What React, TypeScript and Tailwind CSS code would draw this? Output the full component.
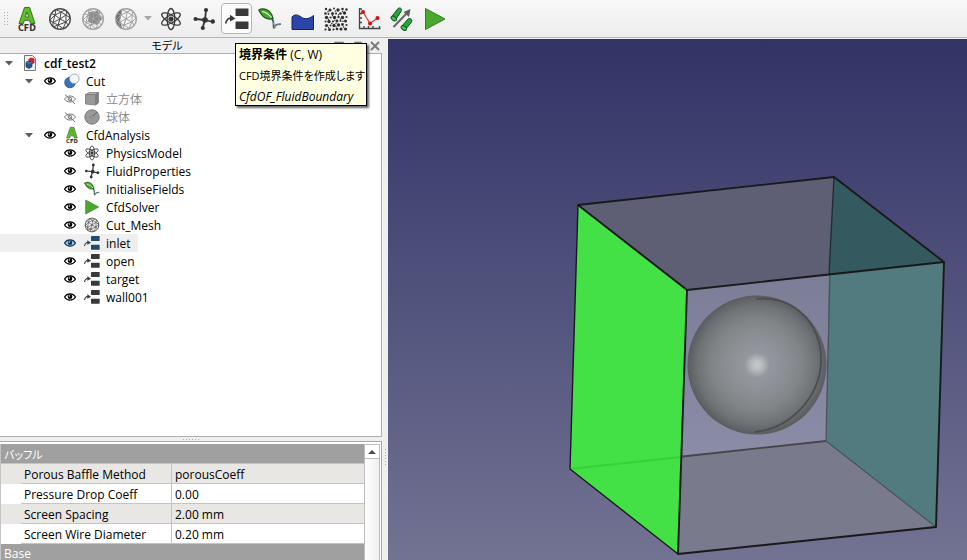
import type { ReactNode } from 'react';

type IconProps = { className?: string; color?: string };

function CfdIcon({ className = 'size-6' }: IconProps) {
  return (
    <svg viewBox="0 0 24 24" className={`overflow-visible ${className}`}>
      <path
        d="M9.5 .5h5.2l5.2 16h-4.4l-1-3.2H9.4l-1 3.2H4z M12 4.8l-1.7 5.2h3.4z"
        fillRule="evenodd"
        fill="#5cc028"
        stroke="#3f6e28"
        strokeWidth="1"
      />
      <text
        x="12"
        y="23.5"
        textAnchor="middle"
        fontSize="8"
        fontWeight="700"
        fontFamily="DejaVu Sans, sans-serif"
        fill="#333"
      >
        CFD
      </text>
    </svg>
  );
}

function MeshIcon({ className = 'size-6', color = '#4a4a4a', part }: IconProps & { part?: 'inner' | 'side' }) {
  return (
    <svg viewBox="0 0 24 24" className={className} fill="none" stroke={color} strokeWidth="1">
      <circle cx="12" cy="12" r="10.3" fill="#f4f4f4" strokeWidth="1.4" />
      {part === 'inner' && <path d="M8 5l9-1 4 8-5 6-9-3z" fill="#8a8a8a" stroke="none" />}
      {part === 'side' && <path d="M8 2.5C0 6 0 18 8 21.5l-2-9z" fill="#6e6e6e" stroke="none" />}
      <path d="M8 2.5L13 5l4-2M13 5L7 8 8 2.5M7 8l-4-1.5M7 8l-5 5M7 8l5 4 1-7M13 5l5 3 1-4M18 8l-6 4M18 8l4 3M18 8l0 7-6-3M12 12l-7 3.5L7 8M5 15.5L2 13M5 15.5L5 20M5 15.5L10 18l2-6M10 18l8-3M10 18l-5 2M10 18l-1 4M10 18l5 3.5 3-6.5M18 15l4-4M18 15l2 3" />
    </svg>
  );
}

function AtomIcon({ className = 'size-6', color = '#3a3a3a' }: IconProps) {
  return (
    <svg viewBox="0 0 24 24" className={className} fill="none" stroke={color} strokeWidth="1.3">
      <ellipse cx="12" cy="12" rx="3.8" ry="10.5" />
      <ellipse cx="12" cy="12" rx="3.8" ry="10.5" transform="rotate(60 12 12)" />
      <ellipse cx="12" cy="12" rx="3.8" ry="10.5" transform="rotate(120 12 12)" />
      <circle cx="12" cy="12" r="2.6" fill={color} stroke="none" />
    </svg>
  );
}

function MoleculeIcon({ className = 'size-6', color = '#333' }: IconProps) {
  return (
    <svg viewBox="0 0 24 24" className={className} fill={color} stroke={color} strokeWidth="1.8">
      <path d="M13 13L3.5 12M13 13l1-10M13 13l8 2M13 13l-2.5 8" fill="none" />
      <g stroke="none">
        <circle cx="13" cy="13" r="2.8" />
        <circle cx="3.5" cy="12" r="2" />
        <circle cx="14" cy="3" r="2.1" />
        <circle cx="20.8" cy="14.5" r="2.2" />
        <circle cx="10.8" cy="21" r="2.1" />
      </g>
    </svg>
  );
}

function BoundaryIcon({ className = 'size-6', color = '#393939' }: IconProps) {
  return (
    <svg viewBox="0 0 24 24" className={className} fill={color}>
      <rect x="10.5" y="1.5" width="13" height="7.5" rx=".6" />
      <rect x="10.5" y="14.5" width="13" height="7.5" rx=".6" />
      <path d="M.8 16.5C1.3 12.5 4 10.8 7 11.2" fill="none" stroke={color} strokeWidth="1.7" />
      <path d="M5 7.8l5.5 3.7L5 14.5z" />
    </svg>
  );
}

function LeafIcon({ className = 'size-6' }: IconProps) {
  return (
    <svg viewBox="0 0 24 24" className={className} fill="none">
      <path d="M.8 3C4 .8 13 1 15 11.500 8.500 13.500 4 10 .8 3z" fill="#46a82c" stroke="#1d4f16" strokeWidth="1.2" />
      <path d="M4 4.500c4 .8 7 3 9.500 6" stroke="#d8f0cc" strokeWidth="1.2" />
      <path d="M14 11c1.5 3 2 5.5 1.8 10.500" stroke="#2f4f4a" strokeWidth="1.8" />
      <path d="M16 21c.8-3 3-4 7-3.800" stroke="#5b7a80" strokeWidth="1.8" />
      <path d="M14.500 14l3 7" stroke="#88a5a8" strokeWidth="1" />
    </svg>
  );
}

function FluidIcon({ className = 'size-6' }: IconProps) {
  return (
    <svg viewBox="0 0 24 24" className={className}>
      <path
        d="M1 10c2.5-3 6-2.5 9 0 3.5 2.6 8 2.2 12.5-1.5v14H1z"
        fill="#2b46a8"
        stroke="#15245e"
        strokeWidth="1"
      />
    </svg>
  );
}

const PORES = [
  [2, 2, 1.2], [6, 3, 1.6], [10, 1.5, 1], [14, 3, 1.7], [18.5, 2, 1.3], [22.5, 2.5, 1.2],
  [1.5, 6.5, 1.3], [4.5, 7, 0.9], [8.5, 6.5, 1.5], [12, 6.5, 1.1], [16.5, 6.5, 1.3], [20.5, 6, 1.7],
  [2.5, 10.5, 1.7], [6.5, 10.5, 1.1], [10.5, 10.5, 1.7], [14.5, 10, 1.2], [18.5, 10.5, 1.7], [22.5, 10, 1.1],
  [1.5, 14.5, 1], [5, 14.5, 1.7], [9, 14.5, 1.1], [13, 14, 1.4], [16.5, 14, 1], [21.5, 14, 1.5],
  [2.5, 18.5, 1.6], [6.5, 18.5, 1], [10, 18.5, 1.7], [14.5, 18, 1.7], [18.5, 17.5, 1.4], [22.5, 18, 1.1],
  [1.5, 22.5, 1.1], [5.5, 22.5, 1.5], [9.5, 22.5, 1.1], [13, 22, 1.3], [17, 22, 1.6], [21.5, 22, 1.6],
  [4, 4.8, 0.8], [11.5, 4, 0.8], [18.5, 4.5, 0.7], [14.5, 7.8, 0.8], [8.5, 8.8, 0.7], [4.5, 12.3, 0.7],
  [16.5, 12.2, 0.8], [10.8, 13.3, 0.7], [19, 14.3, 0.8], [7.8, 16.5, 0.8], [12, 16.2, 0.7], [4.5, 20.5, 0.7],
  [12.2, 20, 0.7], [19.5, 20, 0.8],
];

function PorousIcon({ className = 'size-6' }: IconProps) {
  return (
    <svg viewBox="0 0 24 24" className={className} fill="#303030">
      {PORES.map(([x, y, r]) => (
        <circle key={`${x}-${y}`} cx={x} cy={y} r={r} />
      ))}
    </svg>
  );
}

function PlotIcon({ className = 'size-6' }: IconProps) {
  return (
    <svg viewBox="0 0 24 24" className={className} fill="none">
      <path
        d="M2.5 1v20.5h21M2.5 2h2.5M2.5 6.5h2.5M2.5 11h2.5M2.5 15.5h2.5M7 21.5V19M11.5 21.5V19M16 21.5V19M22.5 21.5V19"
        stroke="#444"
        strokeWidth="1.3"
      />
      <path d="M6 5L13 16.5 20.5 11" stroke="#e02a2a" strokeWidth="1.1" />
      <g fill="#d40f0f">
        <circle cx="6" cy="5" r="2" />
        <circle cx="13" cy="16.5" r="2" />
        <circle cx="20.5" cy="11" r="2" />
      </g>
    </svg>
  );
}

function ProbeIcon({ className = 'size-6' }: IconProps) {
  return (
    <svg viewBox="0 0 24 24" className={className}>
      <path d="M3.5 20L17 6" stroke="#666" strokeWidth="2" />
      <path d="M20.5 2l-1.500 8-5.500-5z" fill="#5f5f5f" />
      <path d="M1.5 10L8 1.5c2.5-1.5 4.5.5 3 3L5.5 13z" fill="#25a53a" stroke="#0d5a1b" />
      <path d="M11.5 19.5l6.5-7.5c2.5-1.5 4.5.5 3.5 3L15.5 22.5z" fill="#25a53a" stroke="#0d5a1b" />
      <ellipse cx="3.8" cy="11.5" rx="3" ry="2" transform="rotate(35 3.8 11.5)" fill="#3fbf55" stroke="#0d5a1b" />
      <ellipse cx="13.8" cy="21" rx="3" ry="2" transform="rotate(35 13.8 21)" fill="#3fbf55" stroke="#0d5a1b" />
    </svg>
  );
}

function PlayIcon({ className = 'size-6' }: IconProps) {
  return (
    <svg viewBox="0 0 24 24" className={className}>
      <path d="M2.5 1.5L22 12 2.5 22.5z" fill="#4ba82e" stroke="#35801f" />
    </svg>
  );
}

function DocumentIcon() {
  return (
    <svg viewBox="0 0 16 16" className="size-4">
      <path d="M2.5 .5h8l3 3v12h-11z" fill="#f2f2f2" stroke="#777" />
      <path d="M6 4.5l3-2 3.5 1v4.5L9 9.5z" fill="#d5202a" />
      <path d="M4 7l3-1 3 1.2v4.5L7 13.5l-3-1.5z" fill="#27568f" stroke="#163a63" strokeWidth=".7" />
      <path d="M4 7l3 1.2L10 7" fill="none" stroke="#6d9bd0" strokeWidth=".7" />
    </svg>
  );
}

function CutIcon({ className = 'size-4' }: IconProps) {
  return (
    <svg viewBox="0 0 16 16" className={className}>
      <circle cx="6" cy="9.5" r="5.3" fill="#3a72bb" stroke="#23518c" strokeWidth=".8" />
      <circle cx="10.3" cy="5.8" r="4.8" fill="#f6f6f6" stroke="#999" strokeWidth=".8" />
    </svg>
  );
}

function CubeIcon({ className = 'size-4' }: IconProps) {
  return (
    <svg viewBox="0 0 16 16" className={className} stroke="#7b7b7b" strokeWidth=".8">
      <path d="M1.5 3.5l4-2h9l-3 2z" fill="#b0b0b0" />
      <path d="M1.5 3.5h10v10.5l-10-1z" fill="#989898" />
      <path d="M11.5 3.5l3-2v10.5l-3 2z" fill="#7f7f7f" />
    </svg>
  );
}

function SphereIcon({ className = 'size-4' }: IconProps) {
  return (
    <svg viewBox="0 0 16 16" className={className}>
      <circle cx="8" cy="8" r="7.2" fill="#999" stroke="#7c7c7c" />
      <path d="M8 8l5-5" stroke="#666" />
      <circle cx="8" cy="8" r="1.3" fill="#bbb" stroke="#666" strokeWidth=".6" />
    </svg>
  );
}

function EyeIcon({ hidden, selected }: { hidden?: boolean; selected?: boolean }) {
  if (hidden) {
    return (
      <svg viewBox="0 0 12 12" className="size-3" fill="none" stroke="#777" strokeWidth="1">
        <path d="M.5 6C3 2 9 2 11.5 6 9 10 3 10 .5 6zM1 1.5l10 9.5" />
        <circle cx="6" cy="6" r="1.8" />
      </svg>
    );
  }
  const ink = selected ? '#0c3558' : '#000';
  return (
    <svg viewBox="0 0 12 12" className="size-3">
      <path d="M.5 6C3 1.8 9 1.8 11.5 6 9 10.2 3 10.2 .5 6z" fill={selected ? '#a9cdee' : '#fff'} stroke={ink} strokeWidth="1.2" />
      <circle cx="6" cy="5.8" r="2.3" fill={ink} />
      <circle cx="5.3" cy="5" r=".7" fill="#fff" />
    </svg>
  );
}

function ToolButton({ label, active, children }: { label: string; active?: boolean; children: ReactNode }) {
  return (
    <button
      type="button"
      aria-label={label}
      className={
        active
          ? 'flex h-[31px] w-[31px] items-center justify-center rounded-sm border border-[#b4b4b4] bg-[#fcfcfc]'
          : 'flex h-[31px] w-[31px] items-center justify-center'
      }
    >
      {children}
    </button>
  );
}

function Toolbar() {
  return (
    <header className="flex h-[38px] shrink-0 items-center gap-0.5 border-b border-[#b6b6b6] bg-linear-to-b from-[#f8f8f8] to-[#ededed] pl-[3px]">
      <div className="h-4 w-[6px] bg-[radial-gradient(#b5b5b5_1px,transparent_1px)] bg-size-[3px_3px]" />
      <ToolButton label="Analysis container"><CfdIcon /></ToolButton>
      <ToolButton label="Mesh"><MeshIcon /></ToolButton>
      <ToolButton label="Mesh refinement"><MeshIcon color="#a2a2a2" part="inner" /></ToolButton>
      <ToolButton label="Dynamic mesh"><MeshIcon color="#a2a2a2" part="side" /></ToolButton>
      <button type="button" aria-label="More mesh tools" className="flex h-8 w-2.5 items-center justify-center">
        <svg viewBox="0 0 8 5" className="h-[5px] w-2"><path d="M0 0h8L4 4.5z" fill="#a8a8a8" /></svg>
      </button>
      <ToolButton label="Physics model"><AtomIcon /></ToolButton>
      <ToolButton label="Fluid properties"><MoleculeIcon /></ToolButton>
      <ToolButton label="境界条件" active><BoundaryIcon /></ToolButton>
      <ToolButton label="Initialise fields"><LeafIcon /></ToolButton>
      <ToolButton label="Initialisation zone"><FluidIcon /></ToolButton>
      <ToolButton label="Porous zone"><PorousIcon /></ToolButton>
      <ToolButton label="Reporting function"><PlotIcon /></ToolButton>
      <ToolButton label="Scalar transport"><ProbeIcon /></ToolButton>
      <ToolButton label="Solver"><PlayIcon /></ToolButton>
    </header>
  );
}

type Item = { name: string; icon: ReactNode; hidden?: boolean; selected?: boolean; children?: Item[] };

const TREE: Item[] = [
  {
    name: 'Cut',
    icon: <CutIcon />,
    children: [
      { name: '立方体', icon: <CubeIcon />, hidden: true },
      { name: '球体', icon: <SphereIcon />, hidden: true },
    ],
  },
  {
    name: 'CfdAnalysis',
    icon: <CfdIcon className="size-4" />,
    children: [
      { name: 'PhysicsModel', icon: <AtomIcon className="size-4" /> },
      { name: 'FluidProperties', icon: <MoleculeIcon className="size-4" /> },
      { name: 'InitialiseFields', icon: <LeafIcon className="size-4" /> },
      { name: 'CfdSolver', icon: <PlayIcon className="size-4" /> },
      { name: 'Cut_Mesh', icon: <MeshIcon className="size-4" /> },
      { name: 'inlet', icon: <BoundaryIcon className="size-4" color="#244a6b" />, selected: true },
      { name: 'open', icon: <BoundaryIcon className="size-4" /> },
      { name: 'target', icon: <BoundaryIcon className="size-4" /> },
      { name: 'wall001', icon: <BoundaryIcon className="size-4" /> },
    ],
  },
];

function Expander() {
  return (
    <button type="button" aria-label="Collapse" className="flex w-2 justify-center">
      <svg viewBox="0 0 8 5" className="h-[5px] w-2"><path d="M0 0h8L4 4.5z" fill="#5c5c5c" /></svg>
    </button>
  );
}

function TreeItem({ item }: { item: Item }) {
  return (
    <li>
      {item.children ? (
        <div className="flex h-[18px] items-center pl-[25px]">
          <Expander />
          <span className="ml-[11px]"><EyeIcon /></span>
          <span className="ml-2">{item.icon}</span>
          <span className="ml-1.5 pt-0.5">{item.name}</span>
        </div>
      ) : (
        <div className={item.selected ? 'flex h-[18px] w-[138px] items-center bg-[#efefef] pl-16' : 'flex h-[18px] items-center pl-16'}>
          <EyeIcon hidden={item.hidden} selected={item.selected} />
          <span className="ml-2">{item.icon}</span>
          <span className={item.hidden ? 'ml-1.5 pt-0.5 text-[#8c8c8c]' : 'ml-1.5 pt-0.5'}>{item.name}</span>
        </div>
      )}
      {item.children && (
        <ul>
          {item.children.map((child) => (
            <TreeItem key={child.name} item={child} />
          ))}
        </ul>
      )}
    </li>
  );
}

const PROPERTIES = [
  ['Porous Baffle Method', 'porousCoeff'],
  ['Pressure Drop Coeff', '0.00'],
  ['Screen Spacing', '2.00 mm'],
  ['Screen Wire Diameter', '0.20 mm'],
];

function PropertyTable() {
  return (
    <div className="flex h-[119px] shrink-0 overflow-hidden border-t border-r border-[#a8a8a8] bg-white pt-0.5 pr-px">
      <table className="h-fit min-w-0 flex-1 table-fixed border-separate border-spacing-0 border-l border-[#c4c4c4] leading-[17px]">
        <colgroup>
          <col className="w-5" />
          <col className="w-[151px]" />
          <col />
        </colgroup>
        <tbody>
          <tr>
            <th colSpan={3} className="h-5 border-b border-[#c4c4c4] bg-[#a0a0a0] pt-0.5 pl-[3px] text-left text-[11px] font-normal text-white [font-feature-settings:'palt']">
              バッフル
            </th>
          </tr>
          {PROPERTIES.map(([name, value]) => (
            <tr key={name} className="odd:bg-white even:bg-[#e8e7e3]">
              <td className="h-5" />
              <th scope="row" className="h-5 border-r border-b border-[#c4c4c4] pt-0.5 pl-[3px] text-left font-normal">{name}</th>
              <td className="h-5 border-b border-[#c4c4c4] pt-0.5 pl-[3px]">{value}</td>
            </tr>
          ))}
          <tr>
            <th colSpan={3} className="h-5 bg-[#a0a0a0] pb-0.5 pl-[3px] text-left font-normal text-white">Base</th>
          </tr>
        </tbody>
      </table>
      <div className="w-4 shrink-0 border-x border-t border-[#bdbdbd] bg-linear-to-r from-white to-[#efefef]">
        <button type="button" aria-label="Scroll up" className="flex h-3.5 w-full items-center justify-center border-b border-[#bdbdbd] bg-white">
          <svg viewBox="0 0 8 4" className="h-1 w-2"><path d="M4 0l4 4H0z" fill="#4c4c4c" /></svg>
        </button>
      </div>
    </div>
  );
}

function ModelPanel() {
  return (
    <aside className="flex w-[388px] shrink-0 bg-[#efefef]">
      <div className="flex min-w-0 flex-1 flex-col">
        <div className="flex h-[15px] shrink-0 items-center gap-2 pr-0.5 pl-2">
          <h2 className="flex-1 text-center text-[11px] leading-[15px] font-normal [font-feature-settings:'palt']">モデル</h2>
          <button type="button" aria-label="Minimize">
            <svg viewBox="0 0 10 10" className="size-2.5"><path d="M1 1.5h8v7H1z" fill="none" stroke="#777" strokeWidth="1.5" /></svg>
          </button>
          <button type="button" aria-label="Float">
            <svg viewBox="0 0 10 10" className="size-2.5"><path d="M3 1.5h6v5H3zM1 4v5h6" fill="none" stroke="#777" strokeWidth="1.5" /></svg>
          </button>
          <button type="button" aria-label="Close">
            <svg viewBox="0 0 10 10" className="size-2.5"><path d="M1 1l8 8M9 1L1 9" stroke="#777" strokeWidth="1.8" /></svg>
          </button>
        </div>
        <div className="flex-1 border-y border-r border-[#b0b0b0] bg-white">
          <div className="flex h-[18px] items-center pl-[5px]">
            <Expander />
            <span className="ml-[9px]"><DocumentIcon /></span>
            <span className="ml-1.5 pt-0.5 font-semibold">cdf_test2</span>
          </div>
          <ul>
            {TREE.map((item) => (
              <TreeItem key={item.name} item={item} />
            ))}
          </ul>
        </div>
        <div className="flex h-1 shrink-0 items-center justify-center">
          <div className="h-px w-[17px] bg-[repeating-linear-gradient(90deg,#aaa_0_1px,transparent_1px_3px)]" />
        </div>
        <PropertyTable />
      </div>
      <div className="flex w-1.5 shrink-0 flex-col items-center justify-end pb-[94px]">
        <div className="h-[17px] w-px bg-[repeating-linear-gradient(#aaa_0_1px,transparent_1px_3px)]" />
      </div>
    </aside>
  );
}

function Viewport() {
  return (
    <main className="mt-px min-w-0 flex-1 bg-linear-to-b from-[#333366] to-[#737393]">
      <svg viewBox="0 0 579 521" preserveAspectRatio="xMidYMid slice" className="size-full">
        <defs>
          <radialGradient id="ball">
            <stop offset="0" stopColor="#c6c9ca" />
            <stop offset=".06" stopColor="#bdc0c2" />
            <stop offset=".18" stopColor="#94989e" />
            <stop offset=".4" stopColor="#8c9096" />
            <stop offset=".65" stopColor="#818486" />
            <stop offset=".85" stopColor="#707376" />
            <stop offset="1" stopColor="#5a5c5f" />
          </radialGradient>
          <linearGradient id="front" x1="0" y1="0" x2="0" y2="1">
            <stop offset="0" stopColor="#7c7e97" />
            <stop offset="1" stopColor="#8b8ca7" />
          </linearGradient>
        </defs>
        <path d="M190 166L446 138 556 223 299 251z" fill="#5e5f74" />
        <path d="M299 251L441 235.5 438 402 294 418z" fill="url(#front)" />
        <path d="M182 430L438 402 548 488 290 515z" fill="#797a8b" />
        <path d="M446 138L556 223 441 235.5z" fill="#345a60" />
        <path d="M441 235.5L556 223 548 488 438 402z" fill="#527b80" />
        <path d="M290 418L438 402" stroke="#464648" strokeWidth="1.8" />
        <path d="M446 138L441 235.5" stroke="#1f3035" strokeWidth="1.4" />
        <path d="M442 235.5L438 402 548 488" fill="none" stroke="#4a5457" strokeWidth="1.2" />
        <circle cx="369" cy="326" r="69.5" fill="url(#ball)" />
        <path d="M368 260C409 256 433 288 433 320 433 358 402 390 366 393" fill="none" stroke="#4b4d50" strokeWidth="1.7" />
        <path d="M190 166L299 251 290 515 182 430z" fill="#43e145" />
        <path d="M182 430L293 418" stroke="#37d23a" strokeWidth="2" />
        <g fill="none" stroke="#19191b" strokeWidth="1.9" strokeLinejoin="round">
          <path d="M190 166L446 138 556 223 299 251z" />
          <path d="M299 251L290 515 548 488 556 223" />
          <path d="M290 515L182 430 190 166" strokeWidth="1.4" />
        </g>
      </svg>
    </main>
  );
}

export default function App() {
  return (
    <div className="relative flex h-screen flex-col overflow-hidden bg-[#efefef] font-['Open_Sans','Noto_Sans_CJK_JP',sans-serif] text-[12px] leading-[18px] text-black">
      <Toolbar />
      <div className="flex min-h-0 flex-1">
        <ModelPanel />
        <Viewport />
      </div>
      <div
        role="tooltip"
        className="absolute top-[43px] left-[235px] h-[63px] w-[132px] border border-black bg-[#ffffe1] pl-[3px] leading-[21px] whitespace-nowrap shadow-[2px_2px_2px_rgba(0,0,0,0.6)]"
      >
        <p><b>境界条件</b> (C, W)</p>
        <p className="text-[11px] [font-feature-settings:'palt']">CFD境界条件を作成します</p>
        <p className="italic">CfdOF_FluidBoundary</p>
      </div>
    </div>
  );
}
